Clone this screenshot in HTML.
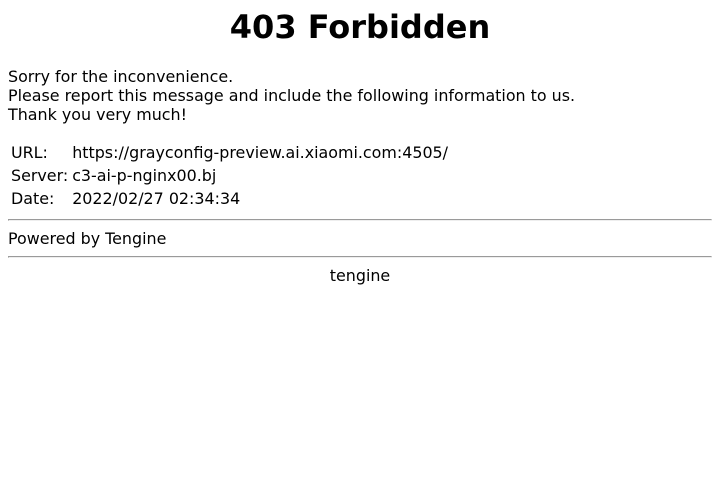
<!DOCTYPE html>
<html>
<head>
<meta charset="utf-8">
<title>403 Forbidden</title>
<style>
body{font-family:"DejaVu Sans",sans-serif;font-size:15.9px;margin:8px;color:#000;background:#fff;}
h1{font-size:32px;margin:8px 0 21px 0;}
table{border-spacing:2px;margin-top:0px;}
td{padding:1px;}
hr{margin:8px 0;}
</style>
</head>
<body>
<center><h1>403 Forbidden</h1></center>
Sorry for the inconvenience.<br>
Please report this message and include the following information to us.<br>
Thank you very much!<p></p>
<table>
<tr><td>URL:</td><td>https://grayconfig-preview.ai.xiaomi.com:4505/</td></tr>
<tr><td>Server:</td><td>c3-ai-p-nginx00.bj</td></tr>
<tr><td>Date:</td><td>2022/02/27 02:34:34</td></tr>
</table>
<hr>Powered by Tengine<hr><center>tengine</center>
</body>
</html>
